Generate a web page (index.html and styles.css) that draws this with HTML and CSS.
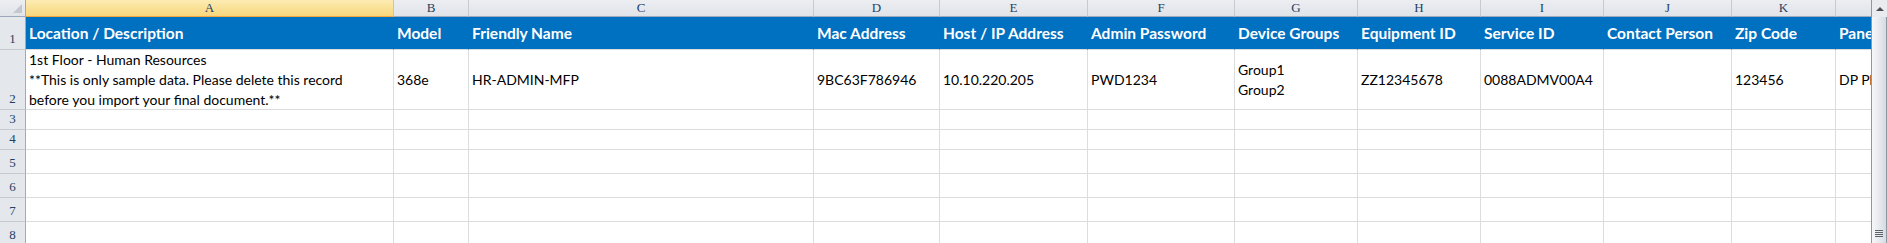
FILE: index.html
```html
<!DOCTYPE html>
<html lang="en">
<head>
    <meta charset="UTF-8">
    <title>Device Import - Sheet1</title>
    <link rel="stylesheet" href="styles.css">
</head>
<body>
    <div class="sheet">
        <div class="grid">
            <!-- column letters -->
            <div class="row row-letters">
                <div class="corner"><span class="corner-tri"></span></div>
                <div class="ch sel">A</div>
                <div class="ch">B</div>
                <div class="ch">C</div>
                <div class="ch">D</div>
                <div class="ch">E</div>
                <div class="ch">F</div>
                <div class="ch">G</div>
                <div class="ch">H</div>
                <div class="ch">I</div>
                <div class="ch">J</div>
                <div class="ch">K</div>
                <div class="ch">L</div>
            </div>

            <!-- 1: field names -->
            <div class="row row-title">
                <div class="rh">1</div>
                <div class="cell head">Location / Description</div>
                <div class="cell head">Model</div>
                <div class="cell head">Friendly Name</div>
                <div class="cell head">Mac Address</div>
                <div class="cell head">Host / IP Address</div>
                <div class="cell head">Admin Password</div>
                <div class="cell head">Device Groups</div>
                <div class="cell head">Equipment ID</div>
                <div class="cell head">Service ID</div>
                <div class="cell head">Contact Person</div>
                <div class="cell head">Zip Code</div>
                <div class="cell head">Panel Type</div>
            </div>

            <!-- 2: sample record -->
            <div class="row row-record">
                <div class="rh">2</div>
                <div class="cell multi">1st Floor - Human Resources<br>**This is only sample data. Please delete this record<br>before you import your final document.**</div>
                <div class="cell">368e</div>
                <div class="cell">HR-ADMIN-MFP</div>
                <div class="cell">9BC63F786946</div>
                <div class="cell">10.10.220.205</div>
                <div class="cell">PWD1234</div>
                <div class="cell multi">Group1<br>Group2</div>
                <div class="cell">ZZ12345678</div>
                <div class="cell">0088ADMV00A4</div>
                <div class="cell"></div>
                <div class="cell">123456</div>
                <div class="cell">DP Phone</div>
            </div>

            <div class="row row-sm">
                <div class="rh">3</div>
                <div class="cell"></div><div class="cell"></div><div class="cell"></div><div class="cell"></div>
                <div class="cell"></div><div class="cell"></div><div class="cell"></div><div class="cell"></div>
                <div class="cell"></div><div class="cell"></div><div class="cell"></div><div class="cell"></div>
            </div>
            <div class="row row-sm">
                <div class="rh">4</div>
                <div class="cell"></div><div class="cell"></div><div class="cell"></div><div class="cell"></div>
                <div class="cell"></div><div class="cell"></div><div class="cell"></div><div class="cell"></div>
                <div class="cell"></div><div class="cell"></div><div class="cell"></div><div class="cell"></div>
            </div>
            <div class="row row-md">
                <div class="rh">5</div>
                <div class="cell"></div><div class="cell"></div><div class="cell"></div><div class="cell"></div>
                <div class="cell"></div><div class="cell"></div><div class="cell"></div><div class="cell"></div>
                <div class="cell"></div><div class="cell"></div><div class="cell"></div><div class="cell"></div>
            </div>
            <div class="row row-md">
                <div class="rh">6</div>
                <div class="cell"></div><div class="cell"></div><div class="cell"></div><div class="cell"></div>
                <div class="cell"></div><div class="cell"></div><div class="cell"></div><div class="cell"></div>
                <div class="cell"></div><div class="cell"></div><div class="cell"></div><div class="cell"></div>
            </div>
            <div class="row row-md">
                <div class="rh">7</div>
                <div class="cell"></div><div class="cell"></div><div class="cell"></div><div class="cell"></div>
                <div class="cell"></div><div class="cell"></div><div class="cell"></div><div class="cell"></div>
                <div class="cell"></div><div class="cell"></div><div class="cell"></div><div class="cell"></div>
            </div>
            <div class="row row-md">
                <div class="rh">8</div>
                <div class="cell"></div><div class="cell"></div><div class="cell"></div><div class="cell"></div>
                <div class="cell"></div><div class="cell"></div><div class="cell"></div><div class="cell"></div>
                <div class="cell"></div><div class="cell"></div><div class="cell"></div><div class="cell"></div>
            </div>
        </div>

        <!-- vertical scroll bar -->
        <div class="vscroll">
            <div class="vscroll-up"><span class="arrow-up"></span></div>
            <div class="vscroll-thumb">
                <span class="grip"></span>
            </div>
        </div>
    </div>
</body>
</html>
```

FILE: styles.css
```css
body {
    margin: 0;
    padding: 0;
    background-color: #fff;
    font-family: 'Lato', 'Liberation Sans', sans-serif;
    color: #000;
}
.sheet {
    display: flex;
    width: 1887px;
    height: 243px;
    overflow: hidden;
}
.grid {
    flex: 1;
    min-width: 0;
    overflow: hidden;
}
.row {
    display: grid;
    grid-template-columns: 26px 368px 75px 345px 126px 148px 147px 123px 123px 123px 128px 104px 140px;
}
.row-letters { height: 17px; }
.row-title { height: 33px; }
.row-record { height: 60px; }
.row-sm { height: 20px; }
.row-md { height: 24px; }

/* headers: letters on top, numbers on the left */
.corner {
    position: relative;
    background: linear-gradient(#eceef2, #e1e4e9);
    border-right: 1px solid #9eaabb;
    border-bottom: 1px solid #9eaabb;
}
.corner-tri {
    position: absolute;
    right: 3px;
    bottom: 3px;
    width: 0;
    height: 0;
    border-left: 9px solid transparent;
    border-bottom: 9px solid #c3c8d0;
}
.ch {
    display: flex;
    align-items: center;
    justify-content: center;
    background: linear-gradient(#eceef2, #e0e3e8);
    border-right: 1px solid #c6cbd2;
    border-bottom: 1px solid #9eaabb;
    font-family: 'Liberation Serif', serif;
    font-size: 13px;
    color: #27405f;
}
.ch.sel {
    background: linear-gradient(#fcecb3, #f8d67c);
    border-right-color: #f1c15f;
    border-bottom-color: #f2a640;
}
.rh {
    display: flex;
    align-items: flex-end;
    justify-content: center;
    padding-bottom: 2px;
    background-color: #e4e7ec;
    border-right: 1px solid #9eaabb;
    border-bottom: 1px solid #c6cbd2;
    font-family: 'Liberation Serif', serif;
    font-size: 13px;
    color: #27405f;
    box-sizing: border-box;
}

/* worksheet cells */
.cell {
    display: flex;
    align-items: center;
    padding: 0 3px;
    border-right: 1px solid #dadcdd;
    border-bottom: 1px solid #dadcdd;
    font-size: 14px;
    line-height: 20px;
    white-space: nowrap;
    overflow: hidden;
}
.cell.head {
    background-color: #0070c0;
    border-right-color: #0070c0;
    color: #fff;
    font-size: 15.5px;
    font-weight: bold;
}

.vscroll {
    display: flex;
    flex-direction: column;
    width: 16px;
    flex: none;
    background-color: #e9ebef;
    border-left: 1px solid #8e97a2;
    box-sizing: border-box;
}
.vscroll-up {
    display: flex;
    align-items: center;
    justify-content: center;
    height: 17px;
    flex: none;
}
.arrow-up {
    width: 0;
    height: 0;
    border-left: 4px solid transparent;
    border-right: 4px solid transparent;
    border-bottom: 4px solid #4a4f57;
}
.vscroll-thumb {
    flex: 1;
    display: flex;
    align-items: flex-end;
    justify-content: center;
    padding-bottom: 6px;
    background: linear-gradient(to right, #f6f7f9, #e4e7ec 60%, #d6dbe2);
    border-right: 1px solid #8e97a2;
}
.grip {
    width: 8px;
    height: 7px;
    background: repeating-linear-gradient(#5d636b 0 1px, transparent 1px 2px);
}
```
